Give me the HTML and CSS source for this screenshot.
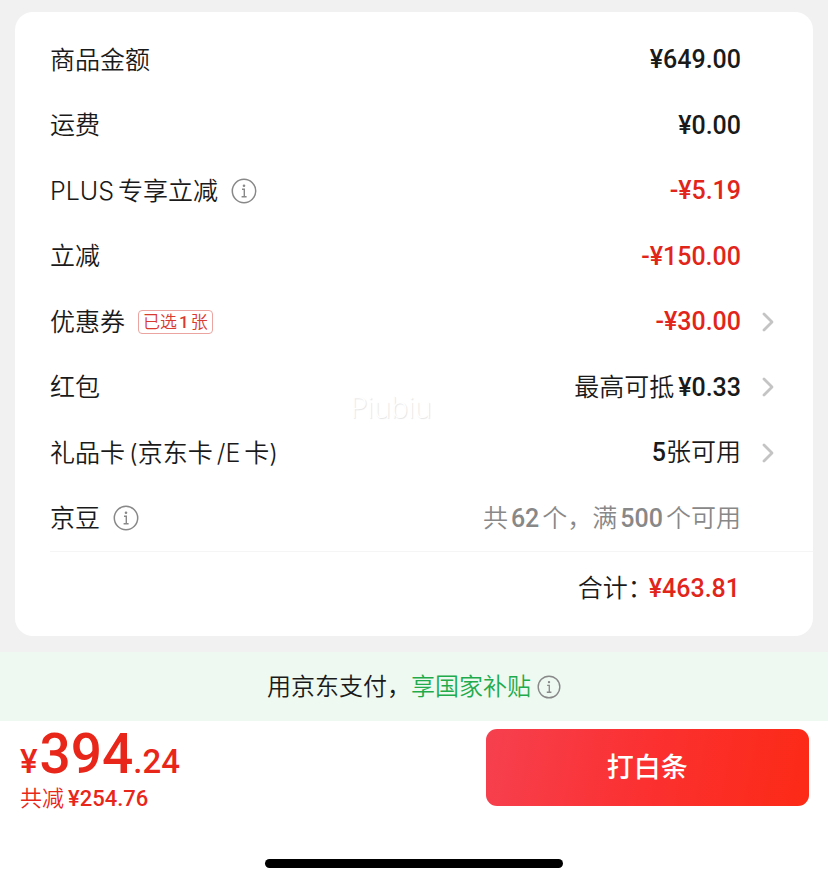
FILE: index.html
```html
<!DOCTYPE html>
<html lang="zh-CN">
<head>
    <meta charset="UTF-8">
    <meta name="viewport" content="width=device-width, initial-scale=1.0">
    <title>确认订单</title>
    <link rel="stylesheet" href="styles.css">
</head>
<body>
    <!-- Shared icons -->
    <svg class="sprite" aria-hidden="true">
        <symbol id="icon-info" viewBox="0 0 26 26">
            <circle cx="13" cy="13" r="11.7" fill="none" stroke="currentColor" stroke-width="1.5"/>
            <circle cx="13" cy="7.7" r="1.3" fill="currentColor"/>
            <path d="M11 11.3h2.3v7.2M10.6 18.7h5" fill="none" stroke="currentColor" stroke-width="1.4"/>
        </symbol>
        <symbol id="icon-arrow" viewBox="0 0 12 20">
            <path d="M2 2l8 8-8 8" fill="none" stroke="currentColor" stroke-width="2.8" stroke-linecap="round" stroke-linejoin="round"/>
        </symbol>
    </svg>

    <main class="card">
        <div class="rows">
            <div class="row">
                <span class="label">商品金额</span>
                <span class="value"><b>¥649.00</b></span>
            </div>
            <div class="row">
                <span class="label">运费</span>
                <span class="value"><b>¥0.00</b></span>
            </div>
            <div class="row">
                <span class="label">PLUS<span class="spaced">专享立减</span></span>
                <button class="info" type="button" aria-label="PLUS专享立减说明"><svg><use href="#icon-info"/></svg></button>
                <span class="value red"><b>-¥5.19</b></span>
            </div>
            <div class="row">
                <span class="label">立减</span>
                <span class="value red"><b>-¥150.00</b></span>
            </div>
            <a class="row" href="#coupon">
                <span class="label">优惠券</span>
                <span class="tag">已选<b>1</b>张</span>
                <span class="value red"><b>-¥30.00</b></span>
                <svg class="arrow"><use href="#icon-arrow"/></svg>
            </a>
            <a class="row" href="#redpacket">
                <span class="label">红包</span>
                <span class="value">最高可抵<b class="spaced">¥0.33</b></span>
                <svg class="arrow"><use href="#icon-arrow"/></svg>
            </a>
            <a class="row" href="#giftcard">
                <span class="label">礼品卡<span class="spaced">(京东卡</span><span class="spaced">/E</span><span class="spaced">卡)</span></span>
                <span class="value"><b>5</b>张可用</span>
                <svg class="arrow"><use href="#icon-arrow"/></svg>
            </a>
            <div class="row">
                <span class="label">京豆</span>
                <button class="info" type="button" aria-label="京豆说明"><svg><use href="#icon-info"/></svg></button>
                <span class="value gray">共<b class="count">62</b>个，满<b class="count">500</b>个可用</span>
            </div>
        </div>
        <div class="total">合计：<b class="red">¥463.81</b></div>
        <span class="watermark">Piubiu</span>
    </main>

    <div class="subsidy">
        <span>用京东支付，<span class="green">享国家补贴</span></span>
        <button class="info small" type="button" aria-label="国家补贴说明"><svg><use href="#icon-info"/></svg></button>
    </div>

    <footer class="pay-bar">
        <div class="price">
            <div class="amount"><b>¥</b><b class="big">394</b><b>.24</b></div>
            <div class="saved">共减<b class="spaced">¥254.76</b></div>
        </div>
        <button class="pay" type="button">打白条</button>
    </footer>
    <div class="home-bar"></div>
</body>
</html>
```

FILE: styles.css
```css
* {
    box-sizing: border-box;
}
body {
    display: flex;
    flex-direction: column;
    min-height: 100vh;
    margin: 0;
    background: #f1f1f1;
    color: #1a1a1a;
    font-family: Inter, "Noto Sans CJK SC", sans-serif;
    font-size: 25px;
    font-weight: 350;
    line-height: 36px;
}
b {
    font-family: Roboto, "Noto Sans CJK SC", sans-serif;
    font-weight: 500;
}
.sprite {
    position: absolute;
    width: 0;
    height: 0;
}
.card {
    position: relative;
    margin: 12px 15px 16px;
    padding: 15px 0 12px 35px;
    background: #fff;
    border-radius: 18px;
}
.rows {
    display: grid;
    grid-auto-rows: 1fr;
    min-height: 525px;
    border-bottom: 1px solid #f5f5f5;
}
.row {
    display: flex;
    align-items: center;
    padding-right: 72px;
    color: inherit;
    text-decoration: none;
}
a.row {
    padding-right: 39px;
}
.value {
    margin-left: auto;
}
.spaced {
    margin-left: 4px;
}
.count {
    margin: 0 3px;
}
.red {
    color: #e1251b;
}
.gray {
    color: #888;
}
.green {
    color: #1fab4b;
}
.arrow {
    width: 12px;
    height: 20px;
    margin-left: 21px;
    color: #c4c4c4;
}
.info {
    width: 26px;
    height: 26px;
    margin-left: 13px;
    padding: 0;
    border: none;
    background: none;
    color: #888;
    cursor: pointer;
}
.info svg {
    display: block;
    width: 100%;
    height: 100%;
}
.info.small {
    width: 24px;
    height: 24px;
    margin-left: 6px;
}
.tag {
    margin-left: 13px;
    padding: 0 4px;
    border: 1px solid #eba49f;
    border-radius: 4px;
    color: #d93a30;
    font-size: 17px;
    line-height: 22px;
}
.tag b {
    margin: 0 2px;
}
.total {
    padding: 18px 73px 17px 0;
    text-align: right;
}
.total b {
    margin-left: -4px;
}
.watermark {
    position: absolute;
    top: 377px;
    left: 42%;
    color: #fff;
    font-family: "Open Sans", sans-serif;
    font-size: 29px;
    text-shadow: 1px 1px 1px #e4e4e4;
    pointer-events: none;
}
.subsidy {
    display: flex;
    align-items: center;
    justify-content: center;
    padding: 17px 0 16px;
    background: #edf9f1;
    font-size: 24px;
}
.pay-bar {
    display: flex;
    align-items: flex-start;
    justify-content: space-between;
    padding: 8px 19px 44px 20px;
    background: #fff;
}
.price {
    color: #e8271a;
}
.amount {
    display: flex;
    align-items: baseline;
    font-size: 33px;
    line-height: 32px;
}
.amount .big {
    margin-left: 2px;
    font-size: 55px;
    line-height: 50px;
}
.saved {
    padding-top: 3px;
    font-size: 22px;
    line-height: 32px;
}
.pay {
    width: 41%;
    padding: 20px 0;
    border: none;
    border-radius: 11px;
    background: linear-gradient(100deg, #f6404f, #fb3030 50%, #fc2a16);
    color: #fff;
    font-family: inherit;
    font-size: 27px;
    font-weight: 500;
    line-height: 37px;
    cursor: pointer;
}
.home-bar {
    flex: 1;
    background: #fff;
}
.home-bar::before {
    content: "";
    display: block;
    width: 36%;
    height: 9px;
    margin: 0 auto;
    border-radius: 5px;
    background: #000;
}
```
